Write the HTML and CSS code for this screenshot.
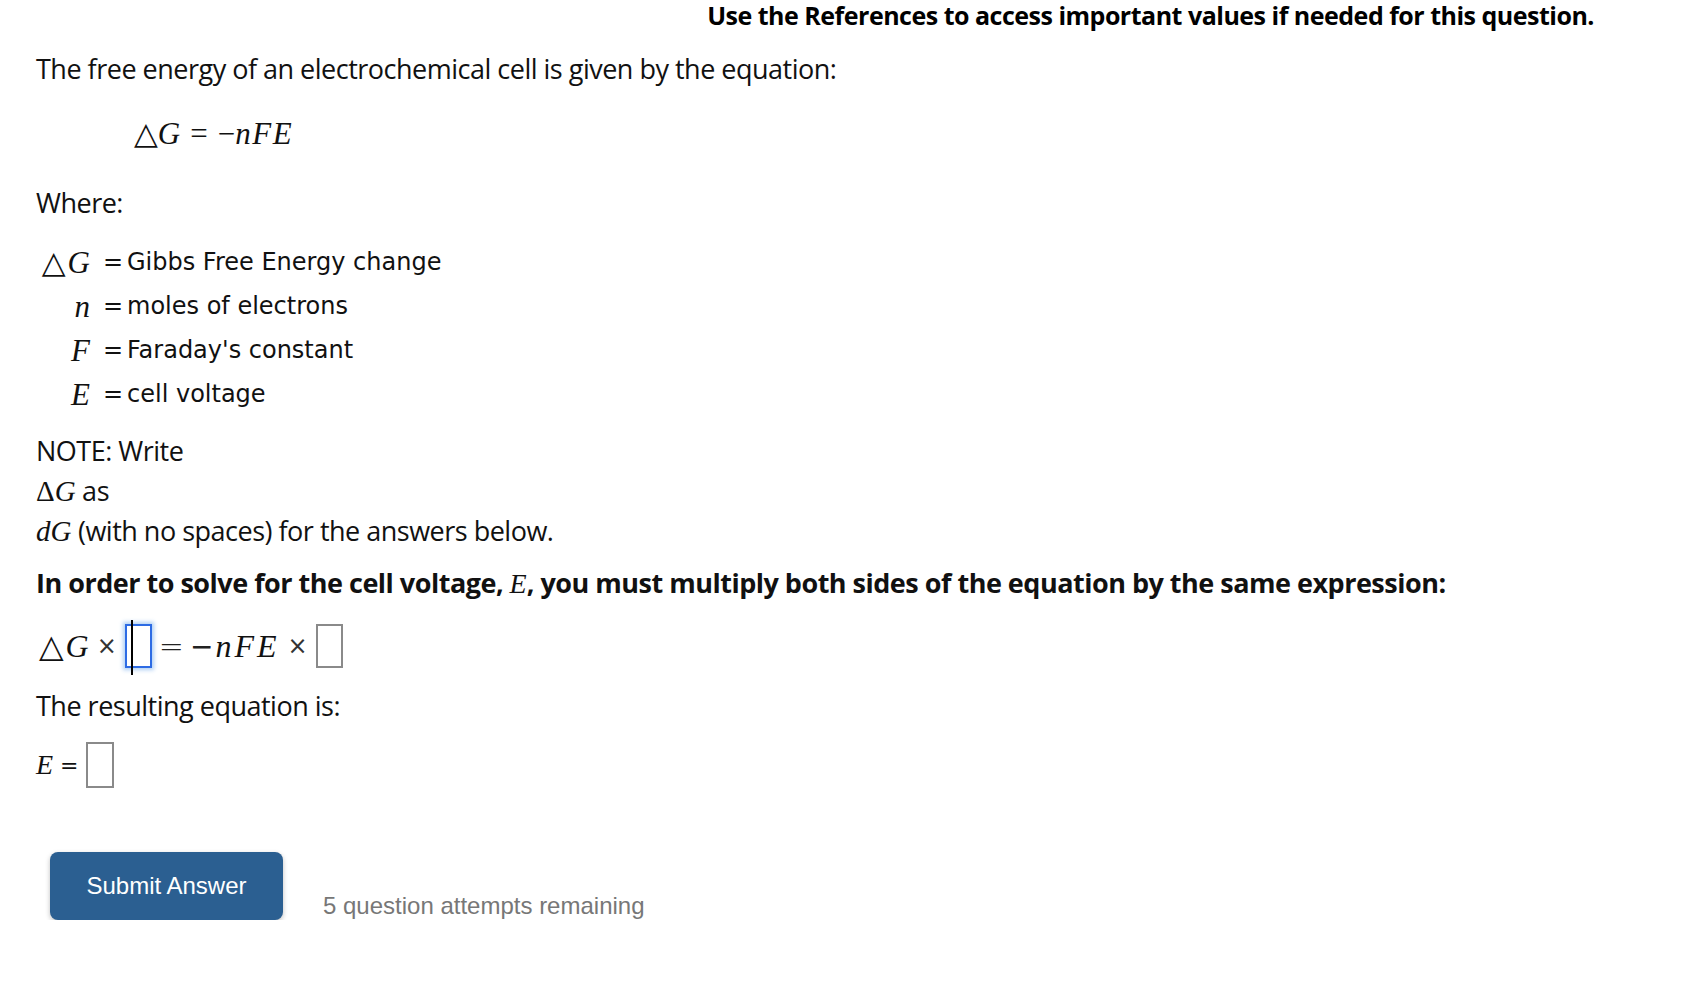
FILE: index.html
```html
<!DOCTYPE html>
<html>
<head>
<meta charset="utf-8">
<link rel="stylesheet" href="styles.css">
</head>
<body>
<div class="page">
  <div class="refnote">Use the References to access important values if needed for this question.</div>
  <div class="content">
    <p class="line first">The free energy of an electrochemical cell is given by the equation:</p>
    <div class="display"><span class="m up">△</span><span class="m">G</span><span class="m up rel">=</span><span class="m up">−</span><span class="m wide">nFE</span></div>
    <p class="line where">Where:</p>
    <div class="defs">
      <div class="sym"><span class="m up tri">△</span><span class="m">G</span></div><div class="eq">=</div><div class="desc">Gibbs Free Energy change</div>
      <div class="sym"><span class="m">n</span></div><div class="eq">=</div><div class="desc">moles of electrons</div>
      <div class="sym"><span class="m">F</span></div><div class="eq">=</div><div class="desc">Faraday's constant</div>
      <div class="sym"><span class="m">E</span></div><div class="eq">=</div><div class="desc">cell voltage</div>
    </div>
    <div class="note">
      <p class="line">NOTE: Write</p>
      <p class="line"><span class="m up">Δ</span><span class="m">G</span> as</p>
      <p class="line"><span class="m">dG</span> (with no spaces) for the answers below.</p>
    </div>
    <p class="line bold">In order to solve for the cell voltage, <span class="m">E</span>, you must multiply both sides of the equation by the same expression:</p>
    <div class="eqrow">
      <span class="m up tri">△</span><span class="m">G</span><span class="times">×</span><span class="box focus"><span class="caret"></span></span><span class="rel2">=</span><span class="minus">−</span><span class="m wide2">nFE</span><span class="times">×</span><span class="box"></span>
    </div>
    <p class="line result">The resulting equation is:</p>
    <div class="erow"><span class="m small">E</span><span class="eqs">=</span><span class="box tall"></span></div>
    <div class="actions">
      <button class="submit">Submit Answer</button>
      <span class="attempts">5 question attempts remaining</span>
    </div>
  </div>
</div>
</body>
</html>
```
FILE: styles.css
```css
html, body {
  margin: 0;
  padding: 0;
  background: #fff;
}
body {
  font-family: "Open Sans", "Liberation Sans", sans-serif;
  color: #111;
}
.page {
  width: 1696px;
}
.refnote {
  font-weight: 700;
  font-size: 25px;
  line-height: 30px;
  text-align: right;
  padding-right: 102px;
  color: #000;
  letter-spacing: -0.5px;
}
.content {
  padding-left: 36px;
}
.line {
  margin: 0;
  font-size: 27px;
  line-height: 40px;
  letter-spacing: -0.5px;
}
.first { margin-top: 19px; }
.m {
  font-family: "Liberation Serif", "DejaVu Serif", serif;
  font-style: italic;
  letter-spacing: 0;
}
.m.up { font-style: normal; }
.display {
  margin-top: 23px;
  padding-left: 98px;
  font-size: 31px;
  line-height: 40px;
}
.display .rel { margin: 0 10px; }
.display .wide { letter-spacing: 1.5px; }
.where { margin-top: 29px; }
.defs {
  margin-top: 17px;
  display: grid;
  grid-template-columns: 54px 37px auto;
  grid-auto-rows: 44px;
  align-items: center;
  font-family: "DejaVu Sans", Verdana, sans-serif;
  font-size: 24px;
  width: 600px;
}
.defs .sym {
  text-align: right;
  font-size: 31px;
  line-height: 44px;
}
.defs .tri { margin-right: 2px; }
.defs .eq {
  text-align: right;
  padding-right: 4px;
}
.note { margin-top: 15px; }
.note .m { font-size: 29px; }
.bold {
  margin-top: 12px;
  font-weight: 700;
}
.bold .m { font-weight: 400; font-size: 28px; }
.eqrow {
  margin-top: 12px;
  padding-left: 3px;
  height: 60px;
  display: flex;
  align-items: center;
  font-size: 32px;
}
.eqrow .tri { margin-right: 2px; }
.times {
  font-family: "DejaVu Sans", sans-serif;
  font-size: 24px;
  color: #333;
  margin: 0 8px 0 8px;
}
.box {
  box-sizing: border-box;
  width: 27px;
  height: 44px;
  border: 2px solid #8a8a8a;
  background: #fff;
  position: relative;
  display: inline-block;
}
.box.focus {
  border-color: #2d6be4;
  box-shadow: 0 0 4px 2px rgba(80, 150, 230, 0.45);
}
.caret {
  position: absolute;
  left: 4px;
  top: -6px;
  width: 2px;
  height: 55px;
  background: #000;
}
.rel2 {
  font-family: "DejaVu Sans", sans-serif;
  font-size: 30px;
  font-weight: 300;
  margin: 0 6px 0 7px;
  color: #222;
}
.minus {
  font-family: "DejaVu Sans", sans-serif;
  font-size: 28px;
  color: #222;
  margin-right: 2px;
}
.wide2 { letter-spacing: 3px; }
.result { margin-top: 10px; }
.erow {
  margin-top: 14px;
  height: 50px;
  display: flex;
  align-items: center;
}
.erow .small { font-size: 28px; }
.eqs {
  font-family: "DejaVu Sans", sans-serif;
  font-size: 22px;
  margin: 0 7px 0 7px;
}
.box.tall {
  width: 28px;
  height: 46px;
}
.actions {
  margin-top: 62px;
  margin-left: 14px;
  display: flex;
  align-items: flex-end;
  gap: 40px;
}
.submit {
  width: 233px;
  height: 68px;
  border: none;
  border-radius: 8px;
  background: #2b5f91;
  color: #fff;
  font-family: "Liberation Sans", Arial, sans-serif;
  font-size: 24px;
  box-shadow: 0 2px 5px rgba(0, 0, 0, 0.25);
  padding: 0;
}
.attempts {
  font-family: "Liberation Sans", Arial, sans-serif;
  font-size: 24px;
  color: #777;
  line-height: 24px;
  margin-bottom: 2px;
}
```
